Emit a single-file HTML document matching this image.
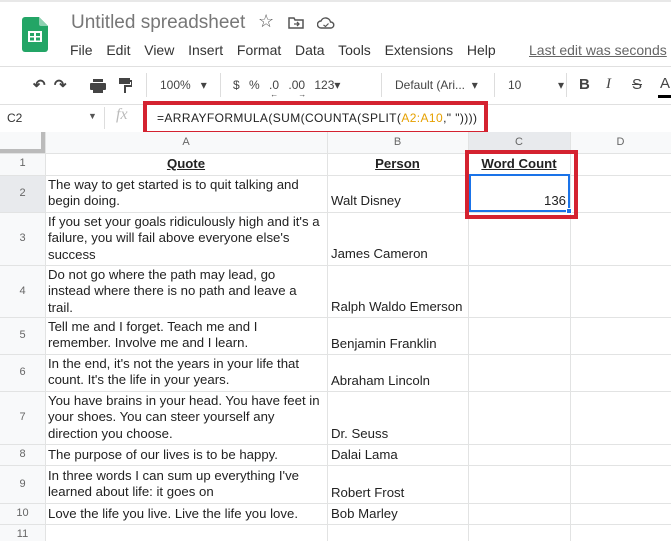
<!DOCTYPE html>
<html><head><meta charset="utf-8"><style>
*{margin:0;padding:0;box-sizing:border-box}
body{width:671px;height:541px;overflow:hidden;background:#fff;font-family:"Liberation Sans",Arial,sans-serif;position:relative;color:#222}
.a{position:absolute;white-space:nowrap}
.hl{position:absolute;left:0;width:671px;height:1px;background:#e2e3e3}
.vl{position:absolute;top:132px;height:409px;width:1px;background:#e2e3e3}
.rn{position:absolute;left:0;width:45px;text-align:center;font-size:11px;color:#666}
.t{position:absolute;font-size:13.2px;line-height:16.3px;color:#222;white-space:nowrap}
.ch{position:absolute;top:132px;height:21px;font-size:11px;color:#666;text-align:center;line-height:21px}
</style></head><body>
<div class="a" style="top:0;left:0;width:671px;height:2px;background:#e8e8e8"></div>
<svg class="a" style="left:22px;top:17px" width="26" height="35" viewBox="0 0 26 35"><path d="M3 0h14l9 9v23a3 3 0 0 1-3 3H3a3 3 0 0 1-3-3V3a3 3 0 0 1 3-3z" fill="#23a566"/><path d="M17 0l9 9h-7a2 2 0 0 1-2-2z" fill="#8ed1b1"/><rect x="6" y="14" width="14" height="11" fill="#fff"/><rect x="8" y="16" width="4" height="3" fill="#23a566"/><rect x="14" y="16" width="4" height="3" fill="#23a566"/><rect x="8" y="20.5" width="4" height="3" fill="#23a566"/><rect x="14" y="20.5" width="4" height="3" fill="#23a566"/></svg>
<div class="a" style="left:71px;top:12px;font-size:19px;color:#777">Untitled spreadsheet</div>
<div class="a" style="left:258px;top:11px;font-size:18px;color:#555">☆</div>
<svg class="a" style="left:288px;top:16px" width="16" height="13"><path d="M1 2h5l1 2h8v8H1z" fill="none" stroke="#555" stroke-width="1.5"/><path d="M6 8h5M9 6l2 2-2 2" fill="none" stroke="#555" stroke-width="1.3"/></svg>
<svg class="a" style="left:317px;top:17px" width="18" height="12"><path d="M4 11a3.5 3.5 0 0 1 0-7 5 5 0 0 1 9.5 1A3 3 0 0 1 14 11z" fill="none" stroke="#555" stroke-width="1.4"/><path d="M6.5 8l2 1.5 3-3" fill="none" stroke="#555" stroke-width="1.2"/></svg>
<div class="a" style="left:70px;top:42px;font-size:14px;color:#333;word-spacing:3px">File&nbsp; Edit&nbsp; View&nbsp; Insert&nbsp; Format&nbsp; Data&nbsp; Tools&nbsp; Extensions&nbsp; Help</div>
<div class="a" style="left:529px;top:42px;font-size:14px;color:#666;text-decoration:underline">Last edit was seconds</div>
<div class="a" style="left:0;top:66px;width:671px;height:1px;background:#e0e0e0"></div>
<div class="a" style="left:33px;top:76px;font-size:15px;color:#444;font-weight:bold">↶&nbsp; ↷</div>
<svg class="a" style="left:90px;top:79px" width="16" height="14"><rect x="3" y="0" width="10" height="3" fill="#444"/><rect x="0" y="4" width="16" height="7" rx="1" fill="#444"/><rect x="3" y="9" width="10" height="5" fill="#444"/></svg>
<svg class="a" style="left:119px;top:78px" width="13" height="16"><rect x="0" y="0" width="11" height="6" fill="#444"/><path d="M11 3h2v5H6v7" fill="none" stroke="#444" stroke-width="2"/></svg>
<div class="a" style="left:146px;top:73px;width:1px;height:24px;background:#ddd"></div>
<div class="a" style="left:160px;top:78px;font-size:12px;color:#444">100%&nbsp;&nbsp; ▾</div>
<div class="a" style="left:220px;top:73px;width:1px;height:24px;background:#ddd"></div>
<div class="a" style="left:233px;top:78px;font-size:12px;color:#444;word-spacing:6px">$ % .0 .00 123▾</div>
<div class="a" style="left:228px;top:90px;font-size:8px;color:#444">&nbsp;&nbsp;&nbsp;&nbsp;&nbsp;&nbsp;&nbsp;&nbsp;&nbsp;&nbsp;&nbsp;&nbsp;&nbsp;&nbsp;&nbsp;&nbsp;&nbsp;&nbsp;&nbsp;←&nbsp;&nbsp;&nbsp;&nbsp;&nbsp;&nbsp;&nbsp;&nbsp;&nbsp;→</div>
<div class="a" style="left:381px;top:73px;width:1px;height:24px;background:#ddd"></div>
<div class="a" style="left:395px;top:78px;font-size:12px;color:#444">Default (Ari...&nbsp; ▾</div>
<div class="a" style="left:494px;top:73px;width:1px;height:24px;background:#ddd"></div>
<div class="a" style="left:508px;top:78px;font-size:12px;color:#444">10&nbsp;&nbsp;&nbsp;&nbsp;&nbsp;&nbsp;&nbsp;&nbsp;&nbsp;&nbsp; ▾</div>
<div class="a" style="left:566px;top:73px;width:1px;height:24px;background:#ddd"></div>
<div class="a" style="left:579px;top:76px;font-size:15px;color:#444;font-weight:bold">B</div>
<div class="a" style="left:606px;top:76px;font-size:15px;color:#444;font-style:italic;font-family:'Liberation Serif',serif">I</div>
<div class="a" style="left:632px;top:76px;font-size:15px;color:#444;text-decoration:line-through">S</div>
<div class="a" style="left:660px;top:75px;font-size:15px;color:#444">A</div>
<div class="a" style="left:658px;top:95px;width:13px;height:3px;background:#000"></div>
<div class="a" style="left:0;top:104px;width:671px;height:1px;background:#e0e0e0"></div>
<div class="a" style="left:7px;top:111px;font-size:12px;color:#333">C2</div>
<div class="a" style="left:88px;top:111px;font-size:9px;color:#555">▼</div>
<div class="a" style="left:104px;top:107px;width:1px;height:22px;background:#ddd"></div>
<div class="a" style="left:116px;top:106px;font-size:16px;color:#bbb;font-style:italic;font-family:'Liberation Serif',serif">fx</div>
<div class="a" style="left:157px;top:111px;font-size:12px;color:#222;letter-spacing:0.4px">=ARRAYFORMULA(SUM(COUNTA(SPLIT(<span style="color:#e6a000">A2:A10</span>," "))))</div>
<div class="a" style="left:143px;top:101px;width:345px;height:34px;border:4px solid #d42230"></div>
<div class="a" style="left:0;top:132px;width:671px;height:21px;background:#f8f9fa"></div>
<div class="a" style="left:0;top:132px;width:45px;height:409px;background:#f8f9fa"></div>
<div class="a" style="left:0;top:175px;width:45px;height:37px;background:#e8eaed"></div>
<div class="a" style="left:468px;top:132px;width:102px;height:21px;background:#e8eaed"></div>
<div class="a" style="left:0;top:132px;width:45px;height:21px;background:#f8f9fa;border-right:4px solid #bbb;border-bottom:4px solid #bbb"></div>
<div class="ch" style="left:45px;width:282px">A</div>
<div class="ch" style="left:327px;width:141px">B</div>
<div class="ch" style="left:468px;width:102px">C</div>
<div class="ch" style="left:570px;width:101px">D</div>
<div class="hl" style="top:153px"></div><div class="hl" style="top:175px"></div><div class="hl" style="top:212px"></div><div class="hl" style="top:265px"></div><div class="hl" style="top:317px"></div><div class="hl" style="top:354px"></div><div class="hl" style="top:391px"></div><div class="hl" style="top:444px"></div><div class="hl" style="top:465px"></div><div class="hl" style="top:503px"></div><div class="hl" style="top:524px"></div>
<div class="vl" style="left:45px"></div><div class="vl" style="left:327px"></div><div class="vl" style="left:468px"></div><div class="vl" style="left:570px"></div>
<div class="rn" style="top:157px">1</div><div class="rn" style="top:187px">2</div><div class="rn" style="top:232px">3</div><div class="rn" style="top:285px">4</div><div class="rn" style="top:329px">5</div><div class="rn" style="top:366px">6</div><div class="rn" style="top:411px">7</div><div class="rn" style="top:448px">8</div><div class="rn" style="top:478px">9</div><div class="rn" style="top:507px">10</div><div class="rn" style="top:528px">11</div>
<div class="t" style="left:45px;width:282px;top:156px;text-align:center;font-weight:bold;text-decoration:underline">Quote</div>
<div class="t" style="left:327px;width:141px;top:156px;text-align:center;font-weight:bold;text-decoration:underline">Person</div>
<div class="t" style="left:468px;width:102px;top:156px;text-align:center;font-weight:bold;text-decoration:underline">Word Count</div>
<div class="t" style="left:48px;top:177px">The way to get started is to quit talking and<br>begin doing.</div>
<div class="t" style="left:331px;top:193px">Walt Disney</div>
<div class="t" style="left:48px;top:214px">If you set your goals ridiculously high and it's a<br>failure, you will fail above everyone else's<br>success</div>
<div class="t" style="left:331px;top:246px">James Cameron</div>
<div class="t" style="left:48px;top:267px">Do not go where the path may lead, go<br>instead where there is no path and leave a<br>trail.</div>
<div class="t" style="left:331px;top:299px">Ralph Waldo Emerson</div>
<div class="t" style="left:48px;top:319px">Tell me and I forget. Teach me and I<br>remember. Involve me and I learn.</div>
<div class="t" style="left:331px;top:336px">Benjamin Franklin</div>
<div class="t" style="left:48px;top:356px">In the end, it's not the years in your life that<br>count. It's the life in your years.</div>
<div class="t" style="left:331px;top:373px">Abraham Lincoln</div>
<div class="t" style="left:48px;top:393px">You have brains in your head. You have feet in<br>your shoes. You can steer yourself any<br>direction you choose.</div>
<div class="t" style="left:331px;top:426px">Dr. Seuss</div>
<div class="t" style="left:48px;top:447px">The purpose of our lives is to be happy.</div>
<div class="t" style="left:331px;top:447px">Dalai Lama</div>
<div class="t" style="left:48px;top:468px">In three words I can sum up everything I've<br>learned about life: it goes on</div>
<div class="t" style="left:331px;top:485px">Robert Frost</div>
<div class="t" style="left:48px;top:506px">Love the life you live. Live the life you love.</div>
<div class="t" style="left:331px;top:506px">Bob Marley</div>
<div class="a" style="left:469px;top:174px;width:101px;height:38px;border:2px solid #1a73e8"></div>
<div class="t" style="left:468px;width:98px;top:193px;text-align:right">136</div>
<div class="a" style="left:566px;top:208px;width:6px;height:6px;background:#1a73e8;border:1px solid #fff"></div>
<div class="a" style="left:465px;top:150px;width:113px;height:69px;border:4px solid #d42230"></div>
</body></html>
